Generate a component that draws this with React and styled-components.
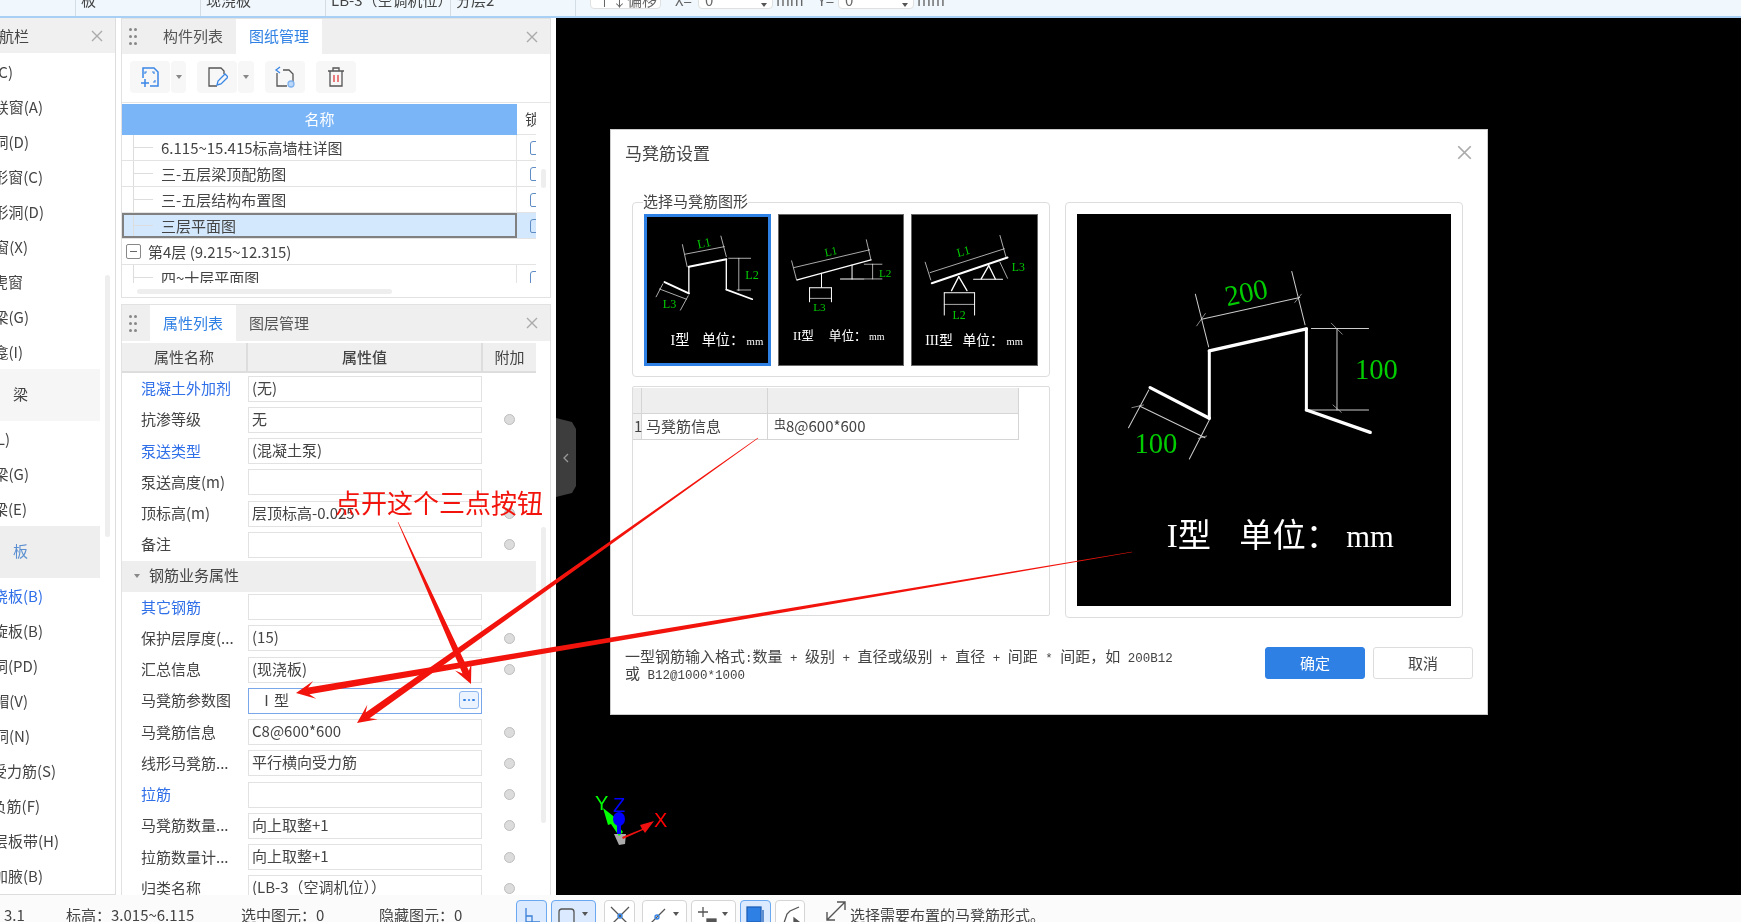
import React from "react";
import styled, { createGlobalStyle } from "styled-components";

const GlobalStyle = createGlobalStyle`
  html, body {
    margin: 0;
    padding: 0;
    background: #fff;
    overflow: hidden;
  }
  body {
    font-family: "Noto Sans CJK SC", "Noto Sans", sans-serif;
    font-size: 15px;
    color: #444;
  }
  * { box-sizing: border-box; }
`;

const navItems = [
  { text: "窗(C)", end: 13 },
  { text: "联窗(A)", end: 43 },
  { text: "洞(D)", end: 29 },
  { text: "带形窗(C)", end: 43 },
  { text: "带形洞(D)", end: 44 },
  { text: "飘窗(X)", end: 28 },
  { text: "老虎窗", end: 23 },
  { text: "过梁(G)", end: 29 },
  { text: "壁龛(I)", end: 23 },
  { text: "梁", group: true },
  { text: "梁(L)", end: 10 },
  { text: "连梁(G)", end: 29 },
  { text: "圈梁(E)", end: 27 },
  { text: "板", group: true, blue: true },
  { text: "现浇板(B)", end: 43, link: true },
  { text: "螺旋板(B)", end: 43 },
  { text: "板洞(PD)", end: 38 },
  { text: "柱帽(V)", end: 28 },
  { text: "板洞(N)", end: 30 },
  { text: "板受力筋(S)", end: 56 },
  { text: "板负筋(F)", end: 40 },
  { text: "楼层板带(H)", end: 59 },
  { text: "板加腋(B)", end: 43 },
];

const drawings = [
  { name: "6.115~15.415标高墙柱详图" },
  { name: "三-五层梁顶配筋图" },
  { name: "三-五层结构布置图" },
  { name: "三层平面图", selected: true },
  { name: "第4层 (9.215~12.315)", group: true },
  { name: "四~十层平面图" },
];

const props1 = [
  { label: "混凝土外加剂", value: "(无)", link: true },
  { label: "抗渗等级", value: "无", radio: true },
  { label: "泵送类型", value: "(混凝土泵)", link: true },
  { label: "泵送高度(m)", value: "" },
  { label: "顶标高(m)", value: "层顶标高-0.025", radio: true },
  { label: "备注", value: "", radio: true },
];

const props2 = [
  { label: "其它钢筋", value: "", link: true },
  { label: "保护层厚度(...", value: "(15)", radio: true },
  { label: "汇总信息", value: "(现浇板)", radio: true },
  { label: "马凳筋参数图", value: "Ⅰ型", active: true },
  { label: "马凳筋信息", value: "C8@600*600", radio: true },
  { label: "线形马凳筋...", value: "平行横向受力筋", radio: true },
  { label: "拉筋", value: "", link: true, radio: true },
  { label: "马凳筋数量...", value: "向上取整+1", radio: true },
  { label: "拉筋数量计...", value: "向上取整+1", radio: true },
  { label: "归类名称", value: "(LB-3（空调机位））", radio: true },
];

const Page = styled.div`
  position: relative;
  width: 1741px;
  height: 922px;
  display: flex;
  flex-direction: column;
  overflow: hidden;
  background: #fff;
  filter: blur(0.35px);
`;

const TopBar = styled.div`
  flex: 0 0 18px;
  display: flex;
  background: #f0f8fd;
  border-bottom: 2px solid #a8d0f4;
  overflow: hidden;
`;

const TopCell = styled.div`
  width: 125px;
  flex: none;
  height: 16px;
  padding-left: 5px;
  border-right: 1px solid #d4dde4;
  line-height: 0;
  white-space: nowrap;
  overflow: hidden;
  &:first-child { width: 76px; }
`;

const TopLabel = styled.span`
  margin-left: ${(p) => p.$left || 0}px;
  line-height: 0;
  color: #666;
  white-space: nowrap;
`;

const TopCombo = styled.div`
  width: ${(p) => p.$width}px;
  height: 10px;
  margin-left: ${(p) => p.$left}px;
  margin-top: -1px;
  padding-left: 6px;
  position: relative;
  background: #fff;
  border: 1px solid #e0e0e0;
  border-radius: 0 0 4px 4px;
  line-height: 0;
  color: #666;
  &::after {
    content: "";
    position: absolute;
    right: 5px;
    bottom: 1px;
    border: 3px solid transparent;
    border-top: 4px solid #555;
    border-bottom: 0;
    display: ${(p) => (p.$arrow ? "block" : "none")};
  }
`;

const Main = styled.div`
  flex: 0 0 877px;
  display: flex;
  min-height: 0;
`;

const Nav = styled.div`
  position: relative;
  flex: 0 0 116px;
  border-right: 1px solid #ddd;
  border-bottom: 1px solid #ddd;
  overflow: hidden;
`;

const NavHeader = styled.div`
  height: 35px;
  display: flex;
  align-items: center;
  justify-content: space-between;
  padding-right: 12px;
  background: #f0f0f0;
`;

const NavRow = styled.div`
  display: flex;
  justify-content: flex-end;
  width: ${(p) => p.$end}px;
  height: 35px;
  line-height: 35px;
  white-space: nowrap;
  color: ${(p) => (p.$link ? "#2f6fe8" : "#444")};
`;

const NavGroup = styled.div`
  width: 100px;
  height: 52px;
  padding-left: 13px;
  line-height: 50px;
  background: ${(p) => (p.$blue ? "#eeeeee" : "#f6f6f6")};
  color: ${(p) => (p.$blue ? "#5b8fd0" : "#444")};
`;

const NavList = styled.div`
  padding-top: 1px;
`;

const NavScroll = styled.div`
  position: absolute;
  left: 105px;
  top: 257px;
  width: 5px;
  height: 262px;
  border-radius: 3px;
  background: #eee;
`;

const PanelColumn = styled.div`
  flex: 0 0 430px;
  margin-left: 5px;
  display: flex;
  flex-direction: column;
  gap: 6px;
  min-height: 0;
`;

const Panel = styled.section`
  position: relative;
  flex: ${(p) => (p.$grow ? "1 1 0" : "0 0 280px")};
  min-height: 0;
  border: 1px solid #e2e2e2;
  border-bottom-width: ${(p) => (p.$grow ? 0 : "1px")};
  overflow: hidden;
  background: #fff;
`;

const TabBar = styled.div`
  height: ${(p) => p.$height}px;
  display: flex;
  align-items: stretch;
  padding-left: 7px;
  background: #efeff0;
`;

const Grip = styled.div`
  width: 8px;
  margin: auto 13px auto 0;
  height: 17px;
  display: grid;
  grid-template-columns: 3px 3px;
  grid-auto-rows: 3px;
  gap: 4px 2px;
  i { background: #888; border-radius: 50%; }
`;

const Tab = styled.div`
  padding: 0 13px;
  line-height: ${(p) => p.$height - 1}px;
  background: ${(p) => (p.$active ? "#fff" : "transparent")};
  color: ${(p) => (p.$active ? "#2f80e4" : "#555")};
  white-space: nowrap;
`;

const CloseIcon = styled.svg`
  width: ${(p) => p.$size || 12}px;
  height: ${(p) => p.$size || 12}px;
  margin-top: ${(p) => p.$top || 0}px;
  margin-right: ${(p) => p.$right || 0}px;
  stroke: #aaa;
  stroke-width: 1.4;
  fill: none;
  flex: none;
`;

const TabClose = styled.div`
  margin: auto 12px auto auto;
  display: flex;
`;

const IconBar = styled.div`
  height: 49px;
  padding: 7px 0 0 8px;
  display: flex;
  gap: 11px;
  border-bottom: 1px solid #e6e6e6;
`;

const ToolGroup = styled.div`
  display: flex;
  height: 32px;
  gap: 1px;
`;

const ToolButton = styled.div`
  width: ${(p) => p.$width || 40}px;
  display: flex;
  align-items: center;
  justify-content: center;
  background: #f7f7f7;
  border-radius: 4px;
`;

const Caret = styled.i`
  width: 0;
  height: 0;
  border: 3px solid transparent;
  border-top: 4px solid #888;
  border-bottom: 0;
`;

const DrawingTable = styled.div`
  width: 414px;
  margin-top: 1px;
  height: 179px;
  overflow: hidden;
`;

const DrawingHead = styled.div`
  display: flex;
  height: 31px;
  line-height: 30px;
`;

const NameHead = styled.div`
  width: 395px;
  text-align: center;
  color: #fff;
  background: #7ab5f7;
`;

const LockHead = styled.div`
  width: 19px;
  padding-left: 8px;
  overflow: hidden;
  white-space: nowrap;
  border-bottom: 1px solid #e4e4e4;
`;

const DrawingRow = styled.div`
  display: flex;
  height: 26px;
  line-height: 24px;
  overflow: hidden;
  border-bottom: 1px solid #e3e3e3;
  background: ${(p) => (p.$selected ? "#d3e8fd" : "#fff")};
`;

const NameCell = styled.div`
  position: relative;
  flex: 0 0 395px;
  display: flex;
  align-items: center;
  padding-left: ${(p) => (p.$group ? "4px" : "11px")};
  border-right: 1px solid #e3e3e3;
  white-space: nowrap;
  ${(p) => (p.$selected ? "outline: 2px solid #808080; outline-offset: -2px;" : "")}
  ${(p) => (p.$group ? "border-right: 0;" : "")}
`;

const Branch = styled.i`
  flex: none;
  width: 20px;
  height: 26px;
  margin-right: 8px;
  border-left: 1px solid #ddd;
  background: linear-gradient(#ddd, #ddd) left 12px / 100% 1px no-repeat;
`;

const MinusBox = styled.i`
  flex: none;
  width: 15px;
  height: 15px;
  margin-right: 7px;
  border: 1px solid #888;
  border-radius: 2px;
  background: linear-gradient(#666, #666) center / 7px 1px no-repeat;
`;

const LockCell = styled.div`
  flex: none;
  width: 19px;
  display: flex;
  align-items: center;
  padding-left: 13px;
  i {
    flex: none;
    width: 10px;
    height: 14px;
    border: 1.5px solid #5f8cc5;
    border-radius: 3px 3px 2px 2px;
    display: ${(p) => (p.$hidden ? "none" : "block")};
  }
`;

const HScroll = styled.div`
  position: absolute;
  left: 15px;
  top: 270px;
  width: 255px;
  height: 5px;
  border-radius: 3px;
  background: #eee;
`;

const VScroll = styled.div`
  position: absolute;
  left: 419px;
  top: ${(p) => p.$top}px;
  width: 5px;
  height: ${(p) => p.$height}px;
  border-radius: 3px;
  background: #eee;
`;

const PropHead = styled.div`
  width: 414px;
  height: 30px;
  margin-top: 2px;
  display: grid;
  grid-template-columns: 126px 235px 53px;
  background: #efefef;
  border-bottom: 2px solid #ddd;
  line-height: 28px;
  text-align: center;
`;

const PropHeadCell = styled.div`
  border-right: 2px solid #ddd;
  font-weight: ${(p) => (p.$bold ? 500 : 400)};
  &:last-child { border-right: 0; }
`;

const PropRow = styled.div`
  height: 31.25px;
  width: 414px;
  display: grid;
  grid-template-columns: 126px 235px 53px;
  align-items: center;
`;

const PropLabel = styled.div`
  padding: 0 0 2px 19px;
  white-space: nowrap;
  color: ${(p) => (p.$link ? "#2f6fe8" : "#444")};
`;

const PropInput = styled.div`
  height: 26px;
  margin-right: 1px;
  padding: 0 3px;
  line-height: 22px;
  display: flex;
  justify-content: space-between;
  align-items: flex-start;
  border: 1px solid ${(p) => (p.$active ? "#79a7ea" : "#e2e2e2")};
  background: #fff;
  white-space: nowrap;
`;

const ActiveValue = styled.span`
  padding-left: 7px;
`;

const DotsButton = styled.div`
  width: 20px;
  height: 18px;
  margin: 2px -1px 0 0;
  display: flex;
  align-items: center;
  justify-content: center;
  gap: 2px;
  border: 1px solid #8db6ee;
  border-radius: 3px;
  background: #eaf3ff;
  i { width: 2.5px; height: 2.5px; background: #2f80e4; border-radius: 50%; }
`;

const Radio = styled.i`
  justify-self: center;
  width: 11px;
  height: 11px;
  border-radius: 50%;
  background: #dcdcdc;
  border: 1px solid #bdbdbd;
`;

const SectionRow = styled.div`
  width: 414px;
  height: 31px;
  display: flex;
  align-items: center;
  padding: 0 0 3px 12px;
  background: #eee;
`;

const SectionCaret = styled.i`
  margin: 2px 9px 0 0;
  border: 3px solid transparent;
  border-top: 4px solid #888;
  border-bottom: 0;
`;

const Canvas = styled.div`
  position: relative;
  flex: 1;
  margin-left: 5px;
  background: #000;
`;

const SideHandle = styled.div`
  position: absolute;
  left: 0;
  top: 400px;
  width: 20px;
  height: 79px;
  display: flex;
  align-items: center;
  justify-content: center;
  background: #3d3d3d;
  border-radius: 0 8px 8px 0;
  clip-path: polygon(0 0, 80% 5%, 100% 14%, 100% 86%, 80% 95%, 0 100%);
`;

const AxisArt = styled.svg`
  position: absolute;
  left: 35px;
  top: 778px;
  width: 80px;
  height: 60px;
`;

const Dialog = styled.div`
  position: absolute;
  left: 54px;
  top: 111px;
  width: 878px;
  height: 586px;
  background: #fff;
  border: 1px solid #ccc;
`;

const DialogHeader = styled.div`
  height: 72px;
  padding: 11px 17px 0 14px;
  display: flex;
  justify-content: space-between;
  align-items: flex-start;
`;

const DialogTitle = styled.div`
  font-size: 17px;
  line-height: 24px;
  color: #444;
`;

const DialogBody = styled.div`
  display: flex;
  gap: 15px;
  padding-left: 21px;
  height: 416px;
`;

const LeftColumn = styled.div`
  width: 418px;
  display: flex;
  flex-direction: column;
  gap: 9px;
`;

const GroupBox = styled.fieldset`
  position: relative;
  height: 175px;
  margin: 0;
  padding: 11px 11px 0 11px;
  display: flex;
  gap: 7px;
  border: 1.5px solid #ddd;
  border-radius: 4px;
`;

const GroupLegend = styled.div`
  position: absolute;
  left: 10px;
  top: -13px;
  line-height: 22px;
  background: #fff;
  white-space: nowrap;
`;

const Thumb = styled.div`
  width: 126.5px;
  height: 152px;
  background: #000;
  border: ${(p) => (p.$active ? "3.5px solid #2f80e4" : "1px solid #666")};
`;

const Art = styled.svg`
  display: block;
  width: 100%;
  height: 100%;
`;

const ArtText = styled.text`
  font-family: "Liberation Serif", "Noto Sans CJK SC", serif;
  font-size: ${(p) => p.$size}px;
  fill: ${(p) => p.$fill};
`;

const ArtLetter = styled.text`
  font-family: "Liberation Sans", sans-serif;
  font-size: 20px;
  fill: ${(p) => p.$fill};
`;

const InfoBox = styled.div`
  height: 230px;
  padding: 1px 0 0 0;
  border: 1.5px solid #ddd;
  border-radius: 2px;
`;

const InfoGrid = styled.div`
  width: 386px;
  display: grid;
  grid-template-columns: 9px 126px 251px;
  grid-auto-rows: 26px;
`;

const InfoHeadCell = styled.div`
  background: #eee;
  border-right: 1.5px solid #d5d5d5;
  border-bottom: 1.5px solid #d5d5d5;
`;

const InfoCell = styled.div`
  border-right: 1.5px solid #d5d5d5;
  border-bottom: 1.5px solid #d5d5d5;
  padding-left: ${(p) => p.$pad}px;
  line-height: 23px;
  background: ${(p) => (p.$gray ? "#f1f1f1" : "#fff")};
  white-space: nowrap;
  overflow: visible;
`;

const RebarMark = styled.span`
  position: relative;
  top: -3px;
  font-size: 12px;
`;

const PreviewBox = styled.div`
  width: 398px;
  height: 416px;
  padding: 11px;
  border: 1.5px solid #ddd;
  border-radius: 4px;
`;

const PreviewImage = styled.div`
  width: 100%;
  height: 100%;
  background: #000;
`;

const DialogFooter = styled.div`
  display: flex;
  justify-content: space-between;
  padding: 0 14px 0 14px;
  margin-top: 29px;
`;

const Note = styled.div`
  width: 560px;
  font-size: 15px;
  line-height: 17px;
  white-space: pre;
  color: #444;
`;

const Mono = styled.span`
  font-family: "Liberation Mono", monospace;
  font-size: 12.5px;
  line-height: 0;
`;

const FooterButtons = styled.div`
  display: flex;
  gap: 8px;
`;

const DialogButton = styled.div`
  width: 100px;
  height: 32px;
  line-height: 30px;
  text-align: center;
  border-radius: 3px;
  background: ${(p) => (p.$primary ? "#2f80e4" : "#fff")};
  color: ${(p) => (p.$primary ? "#fff" : "#444")};
  border: 1px solid ${(p) => (p.$primary ? "#2f80e4" : "#ddd")};
`;

const StatusBar = styled.div`
  flex: 0 0 27px;
  display: flex;
  background: #fbfbfb;
  overflow: hidden;
`;

const StatusText = styled.div`
  margin-left: ${(p) => p.$left}px;
  width: ${(p) => p.$width}px;
  flex: none;
  padding-top: 8px;
  line-height: 24px;
  white-space: nowrap;
`;

const StatusButton = styled.div`
  flex: none;
  width: ${(p) => p.$width}px;
  height: 34px;
  margin-top: 5px;
  margin-left: ${(p) => p.$left}px;
  padding: 3px 0 0 3px;
  display: flex;
  gap: 3px;
  border: 1px solid ${(p) => (p.$active ? "#6aa9f0" : "#d5d5d5")};
  border-radius: 4px;
  background: ${(p) => (p.$active ? "#dbeafe" : "#fff")};
  i {
    margin-top: 8px;
    border: 3px solid transparent;
    border-top: 4px solid #555;
    border-bottom: 0;
    height: 0;
  }
`;

const StatusIcon = styled.svg`
  width: 24px;
  height: 24px;
  flex: none;
  fill: none;
  stroke: ${(p) => p.$stroke || "#555"};
  stroke-width: 1.3;
`;

const ResizeIcon = styled.svg`
  flex: none;
  margin: 5px 0 0 20px;
  width: 22px;
  height: 22px;
  fill: none;
  stroke: #555;
  stroke-width: 1.4;
`;

const Overlay = styled.svg`
  position: absolute;
  left: 0;
  top: 0;
  width: 1741px;
  height: 922px;
  pointer-events: none;
`;

const CalloutText = styled.div`
  position: absolute;
  left: 335px;
  top: 484px;
  font-size: 26px;
  line-height: 36px;
  color: #f2140c;
  white-space: nowrap;
`;

// tapered red arrow like the ones drawn in a screenshot tool
function arrowShape(x1, y1, x2, y2, w) {
  const len = Math.hypot(x2 - x1, y2 - y1);
  const dx = (x2 - x1) / len;
  const dy = (y2 - y1) / len;
  const nx = -dy;
  const ny = dx;
  const at = (along, side) =>
    `${(x1 + dx * along + nx * side).toFixed(1)},${(y1 + dy * along + ny * side).toFixed(1)}`;
  return [
    at(0, 0.3),
    at(len - 13, w / 2),
    at(len - 19, 9),
    at(len, 0),
    at(len - 19, -9),
    at(len - 13, -w / 2),
    at(0, -0.3),
  ].join(" ");
}

const Segments = ({ items, color = "#fff" }) =>
  items.map(([x1, y1, x2, y2, w], i) => (
    <line key={i} x1={x1} y1={y1} x2={x2} y2={y2} stroke={color} strokeWidth={w} strokeLinecap="round" />
  ));

const ThumbOne = () => (
  <Art viewBox="113 279 357 428" preserveAspectRatio="none">
    <Segments
      items={[
        [165, 470, 237, 503, 6],
        [237, 503, 237, 425, 4],
        [237, 425, 348, 403, 6],
        [348, 403, 348, 492, 4],
        [348, 492, 425, 520, 5],
        [218, 360, 232, 425, 2],
        [332, 335, 348, 395, 2],
        [226, 388, 342, 366, 2],
        [355, 400, 420, 400, 2],
        [385, 400, 385, 495, 2],
        [380, 493, 420, 493, 2],
        [160, 475, 140, 513, 2],
        [235, 510, 212, 552, 2],
        [150, 490, 230, 520, 2],
      ]}
    />
    <ArtText x="262" y="368" $size={36} $fill="#0c0" transform="rotate(-12 280 355)">L1</ArtText>
    <ArtText x="404" y="460" $size={36} $fill="#0c0">L2</ArtText>
    <ArtText x="160" y="546" $size={36} $fill="#0c0">L3</ArtText>
    <ArtText x="183" y="655" $size={42} $fill="#fff">I型</ArtText>
    <ArtText x="275" y="655" $size={42} $fill="#fff">单位：</ArtText>
    <ArtText x="408" y="655" $size={32} $fill="#fff">mm</ArtText>
  </Art>
);

const ThumbTwo = () => (
  <Art viewBox="505 271 375 448" preserveAspectRatio="none">
    <Segments
      items={[
        [550, 428, 778, 375, 2],
        [543, 408, 558, 465, 2],
        [768, 345, 782, 405, 2],
        [560, 465, 782, 405, 4],
        [633, 445, 633, 487, 3],
        [597, 488, 663, 488, 3],
        [597, 488, 597, 530, 3],
        [663, 488, 663, 530, 3],
        [597, 520, 663, 520, 2],
        [725, 420, 725, 462, 3],
        [690, 462, 760, 462, 3],
        [762, 418, 815, 418, 2],
        [762, 462, 815, 462, 2],
        [787, 418, 787, 462, 2],
      ]}
    />
    <ArtText x="642" y="392" $size={34} $fill="#0c0" transform="rotate(-12 657 378)">L1</ArtText>
    <ArtText x="806" y="456" $size={34} $fill="#0c0">L2</ArtText>
    <ArtText x="608" y="557" $size={34} $fill="#0c0">L3</ArtText>
    <ArtText x="547" y="643" $size={38} $fill="#fff">II型</ArtText>
    <ArtText x="655" y="643" $size={38} $fill="#fff">单位：</ArtText>
    <ArtText x="776" y="643" $size={30} $fill="#fff">mm</ArtText>
  </Art>
);

const ThumbThree = () => (
  <Art viewBox="905 271 378 448" preserveAspectRatio="none">
    <Segments
      items={[
        [960, 443, 1185, 372, 2],
        [945, 412, 962, 465, 2],
        [1172, 332, 1190, 395, 2],
        [965, 475, 1195, 398, 6],
        [1047, 455, 1025, 497, 4],
        [1047, 455, 1072, 497, 4],
        [1003, 503, 1095, 503, 3],
        [1003, 503, 1003, 570, 3],
        [1095, 503, 1095, 570, 3],
        [1003, 538, 1095, 538, 2],
        [1138, 422, 1115, 462, 4],
        [1138, 422, 1158, 462, 4],
        [1092, 463, 1180, 463, 3],
        [1172, 412, 1195, 460, 2],
      ]}
    />
    <ArtText x="1040" y="392" $size={36} $fill="#0c0" transform="rotate(-15 1058 377)">L1</ArtText>
    <ArtText x="1208" y="437" $size={36} $fill="#0c0">L3</ArtText>
    <ArtText x="1028" y="583" $size={36} $fill="#0c0">L2</ArtText>
    <ArtText x="945" y="660" $size={42} $fill="#fff">III型</ArtText>
    <ArtText x="1058" y="660" $size={42} $fill="#fff">单位：</ArtText>
    <ArtText x="1192" y="660" $size={32} $fill="#fff">mm</ArtText>
  </Art>
);

const PreviewArt = () => (
  <Art viewBox="80 268 1125 1174" preserveAspectRatio="none">
    <Segments
      color="#ccc"
      items={[
        [436, 508, 476, 666, 3],
        [726, 440, 766, 600, 3],
        [455, 583, 750, 518, 3],
        [440, 603, 466, 566, 2],
        [735, 533, 755, 508, 2],
        [785, 611, 957, 611, 3],
        [775, 855, 957, 855, 3],
        [862, 611, 862, 855, 3],
        [845, 595, 878, 628, 2],
        [850, 840, 875, 862, 2],
        [235, 908, 296, 795, 3],
        [418, 1002, 478, 885, 3],
        [268, 843, 465, 938, 3],
        [245, 848, 280, 840, 2],
        [445, 940, 470, 933, 2],
      ]}
    />
    <Segments
      items={[
        [300, 788, 478, 880, 10],
        [478, 880, 478, 678, 9],
        [478, 678, 770, 612, 10],
        [770, 612, 770, 855, 9],
        [770, 855, 962, 922, 10],
      ]}
    />
    <ArtText x="522" y="532" $size={86} $fill="#0c0" transform="rotate(-12 587 490)">200</ArtText>
    <ArtText x="916" y="762" $size={86} $fill="#0c0">100</ArtText>
    <ArtText x="253" y="984" $size={86} $fill="#0c0">100</ArtText>
    <ArtText x="350" y="1265" $size={100} $fill="#fff">I型</ArtText>
    <ArtText x="568" y="1265" $size={100} $fill="#fff">单位：</ArtText>
    <ArtText x="890" y="1265" $size={92} $fill="#fff">mm</ArtText>
  </Art>
);

const Close = ({ size, top, right }) => (
  <CloseIcon $size={size} $top={top} $right={right} viewBox="0 0 12 12">
    <path d="M1 1l10 10M11 1L1 11" />
  </CloseIcon>
);

const GripDots = () => (
  <Grip>
    {[0, 1, 2, 3, 4, 5].map((i) => (
      <i key={i} />
    ))}
  </Grip>
);

const AddSheetIcon = () => (
  <svg width="22" height="22" viewBox="0 0 22 22" fill="none" stroke="#3b87e6" strokeWidth="1.5">
    <path d="M4 12V2h11l4 4v14H11" />
    <path d="M8 6H6v2M13 6h2v2M16 14v2h-2" strokeWidth="1.2" />
    <path d="M6 13v8M2 17h8" />
  </svg>
);

const EditSheetIcon = () => (
  <svg width="22" height="22" viewBox="0 0 22 22" fill="none" stroke="#555" strokeWidth="1.3">
    <path d="M18 8V5l-3-3H3v18h8" />
    <path d="M11 19l1-4 7-7 3 3-7 7z" stroke="#3b87e6" />
  </svg>
);

const LoadSheetIcon = () => (
  <svg width="22" height="22" viewBox="0 0 22 22" fill="none" stroke="#555" strokeWidth="1.3">
    <path d="M9 4h6l4 4v8M13 20H3V7" />
    <path d="M6 1L2 4l4 3" stroke="#3b87e6" />
    <circle cx="17" cy="18" r="3" fill="#bcd7f7" stroke="#7fb2ef" />
  </svg>
);

const TrashIcon = () => (
  <svg width="22" height="22" viewBox="0 0 22 22" fill="none" stroke="#555" strokeWidth="1.3">
    <path d="M3 5h16M8 5V2h6v3M5 5v15h12V5" />
    <path d="M9 9v7M13 9v7" stroke="#e03a3a" />
  </svg>
);

const App = () => {
  return (
    <Page>
      <GlobalStyle />
      <TopBar>
        <TopCell>&nbsp;</TopCell>
        <TopCell>板</TopCell>
        <TopCell>现浇板</TopCell>
        <TopCell>LB-3（空调机位）</TopCell>
        <TopCell>分层2</TopCell>
        <TopCombo $width={71} $left={14}>↑↓偏移</TopCombo>
        <TopLabel $left={14}>X=</TopLabel>
        <TopCombo $width={75} $left={6} $arrow>0</TopCombo>
        <TopLabel $left={3}>mm</TopLabel>
        <TopLabel $left={14}>Y=</TopLabel>
        <TopCombo $width={76} $left={4} $arrow>0</TopCombo>
        <TopLabel $left={3}>mm</TopLabel>
      </TopBar>

      <Main>
        <Nav>
          <NavHeader>
            <NavRow $end={29}>导航栏</NavRow>
            <Close />
          </NavHeader>
          <NavList>
            {navItems.map((item) =>
              item.group ? (
                <NavGroup key={item.text} $blue={item.blue}>{item.text}</NavGroup>
              ) : (
                <NavRow key={item.text} $end={item.end} $link={item.link}>{item.text}</NavRow>
              )
            )}
          </NavList>
          <NavScroll />
        </Nav>

        <PanelColumn>
          <Panel>
            <TabBar $height={35}>
              <GripDots />
              <Tab $height={35}>构件列表</Tab>
              <Tab $height={35} $active>图纸管理</Tab>
              <TabClose><Close /></TabClose>
            </TabBar>
            <IconBar>
              <ToolGroup>
                <ToolButton><AddSheetIcon /></ToolButton>
                <ToolButton $width={15}><Caret /></ToolButton>
              </ToolGroup>
              <ToolGroup>
                <ToolButton><EditSheetIcon /></ToolButton>
                <ToolButton $width={16}><Caret /></ToolButton>
              </ToolGroup>
              <ToolGroup><ToolButton><LoadSheetIcon /></ToolButton></ToolGroup>
              <ToolGroup><ToolButton><TrashIcon /></ToolButton></ToolGroup>
            </IconBar>
            <DrawingTable>
              <DrawingHead>
                <NameHead>名称</NameHead>
                <LockHead>锁定</LockHead>
              </DrawingHead>
              {drawings.map((d) => (
                <DrawingRow key={d.name} $selected={d.selected}>
                  <NameCell $group={d.group} $selected={d.selected}>
                    {d.group ? <MinusBox /> : <Branch />}
                    {d.name}
                  </NameCell>
                  <LockCell $hidden={d.group}><i /></LockCell>
                </DrawingRow>
              ))}
            </DrawingTable>
            <HScroll />
            <VScroll $top={150} $height={19} />
          </Panel>

          <Panel $grow>
            <TabBar $height={36}>
              <GripDots />
              <Tab $height={36} $active>属性列表</Tab>
              <Tab $height={36}>图层管理</Tab>
              <TabClose><Close /></TabClose>
            </TabBar>
            <PropHead>
              <PropHeadCell>属性名称</PropHeadCell>
              <PropHeadCell $bold>属性值</PropHeadCell>
              <PropHeadCell>附加</PropHeadCell>
            </PropHead>
            {props1.map((p) => (
              <PropRow key={p.label}>
                <PropLabel $link={p.link}>{p.label}</PropLabel>
                <PropInput>{p.value}</PropInput>
                {p.radio && <Radio />}
              </PropRow>
            ))}
            <SectionRow>
              <SectionCaret />
              钢筋业务属性
            </SectionRow>
            {props2.map((p) => (
              <PropRow key={p.label}>
                <PropLabel $link={p.link}>{p.label}</PropLabel>
                <PropInput $active={p.active}>
                  {p.active ? <ActiveValue>{p.value}</ActiveValue> : p.value}
                  {p.active && (
                    <DotsButton><i /><i /><i /></DotsButton>
                  )}
                </PropInput>
                {p.radio && <Radio />}
              </PropRow>
            ))}
            <VScroll $top={222} $height={296} />
          </Panel>
        </PanelColumn>

        <Canvas>
          <SideHandle>
            <svg width="8" height="12" viewBox="0 0 8 12" fill="none" stroke="#999" strokeWidth="1.3">
              <path d="M6 2L2 6l4 4" />
            </svg>
          </SideHandle>

          <AxisArt viewBox="0 0 80 60">
            <path d="M23 38l5 11 6-1 1-10z" fill="#aaa" />
            <path d="M28 40L20 28l-3 1-5-17 14 11-2 3 8 10z" fill="#0f0" />
            <ellipse cx="28" cy="23" rx="6" ry="7" fill="#00f" />
            <path d="M28 38V24" stroke="#00f" strokeWidth="4" />
            <path d="M31 41l20-8-2-4 14-4-9 12-2-3-20 9z" fill="#f01010" />
            <ArtLetter x="4" y="14" $fill="#0f0">Y</ArtLetter>
            <ArtLetter x="22" y="16" $fill="#00f">Z</ArtLetter>
            <ArtLetter x="63" y="31" $fill="#f00">X</ArtLetter>
          </AxisArt>

          <Dialog>
            <DialogHeader>
              <DialogTitle>马凳筋设置</DialogTitle>
              <Close size={15} top={4} right={-2} />
            </DialogHeader>
            <DialogBody>
              <LeftColumn>
                <GroupBox>
                  <GroupLegend>选择马凳筋图形</GroupLegend>
                  <Thumb $active><ThumbOne /></Thumb>
                  <Thumb><ThumbTwo /></Thumb>
                  <Thumb><ThumbThree /></Thumb>
                </GroupBox>
                <InfoBox>
                  <InfoGrid>
                    <InfoHeadCell />
                    <InfoHeadCell />
                    <InfoHeadCell />
                    <InfoCell $pad={1} $gray>1</InfoCell>
                    <InfoCell $pad={4}>马凳筋信息</InfoCell>
                    <InfoCell $pad={6}><RebarMark>虫</RebarMark>8@600*600</InfoCell>
                  </InfoGrid>
                </InfoBox>
              </LeftColumn>
              <PreviewBox><PreviewImage><PreviewArt /></PreviewImage></PreviewBox>
            </DialogBody>
            <DialogFooter>
              <Note>
                一型钢筋输入格式<Mono>:</Mono>数量<Mono> + </Mono>级别<Mono> + </Mono>直径或级别<Mono> + </Mono>直径<Mono> + </Mono>间距<Mono> * </Mono>间距，如<Mono> 200B12</Mono>
                {"\n"}或<Mono> B12@1000*1000</Mono>
              </Note>
              <FooterButtons>
                <DialogButton $primary>确定</DialogButton>
                <DialogButton>取消</DialogButton>
              </FooterButtons>
            </DialogFooter>
          </Dialog>
        </Canvas>
      </Main>

      <StatusBar>
        <StatusText $left={4} $width={62}>3.1</StatusText>
        <StatusText $left={0} $width={175}>标高：3.015~6.115</StatusText>
        <StatusText $left={0} $width={138}>选中图元：0</StatusText>
        <StatusText $left={0} $width={137}>隐藏图元：0</StatusText>
        <StatusButton $width={31} $active>
          <StatusIcon viewBox="0 0 24 24" $stroke="#3a7fd8"><path d="M6 4v14h14M6 12h6v6" /></StatusIcon>
        </StatusButton>
        <StatusButton $width={45} $left={4} $active>
          <StatusIcon viewBox="0 0 24 24"><rect x="4" y="5" width="15" height="16" rx="3" /></StatusIcon>
          <i />
        </StatusButton>
        <StatusButton $width={31} $left={8}>
          <StatusIcon viewBox="0 0 24 24"><path d="M3 3l18 18M21 3L3 21" /><circle cx="12" cy="12" r="2" stroke="#2f80e4" /></StatusIcon>
        </StatusButton>
        <StatusButton $width={45} $left={7}>
          <StatusIcon viewBox="0 0 24 24"><path d="M3 21L19 5M6 20h14" /><circle cx="11" cy="13" r="2" stroke="#2f80e4" /></StatusIcon>
          <i />
        </StatusButton>
        <StatusButton $width={45} $left={4}>
          <StatusIcon viewBox="0 0 24 24"><path d="M3 8h10M8 3v10" /><rect x="12" y="15" width="9" height="6" fill="#555" /></StatusIcon>
          <i />
        </StatusButton>
        <StatusButton $width={31} $left={4} $active>
          <StatusIcon viewBox="0 0 24 24" $stroke="#1e5fb8"><rect x="3" y="3" width="14" height="15" fill="#2f80e4" /><path d="M19 6v14H7" /></StatusIcon>
        </StatusButton>
        <StatusButton $width={30} $left={4}>
          <StatusIcon viewBox="0 0 24 24"><path d="M4 22l4-12 3-3 9-4" /><path d="M15 14l5 4-5 3z" fill="#555" /></StatusIcon>
        </StatusButton>
        <ResizeIcon viewBox="0 0 22 22"><path d="M2 20L20 2M12 2h8v8M2 12v8h8" /></ResizeIcon>
        <StatusText $left={3} $width={200}>选择需要布置的马凳筋形式。</StatusText>
      </StatusBar>

      <Overlay viewBox="0 0 1741 922">
        <polygon points={arrowShape(398, 522, 471, 684, 7)} fill="#f2140c" />
        <polygon points={arrowShape(758, 438, 357, 723, 7)} fill="#f2140c" />
        <polygon points={arrowShape(1132, 552, 296, 693, 7)} fill="#f2140c" />
      </Overlay>
      <CalloutText>点开这个三点按钮</CalloutText>
    </Page>
  );
};

export default App;
